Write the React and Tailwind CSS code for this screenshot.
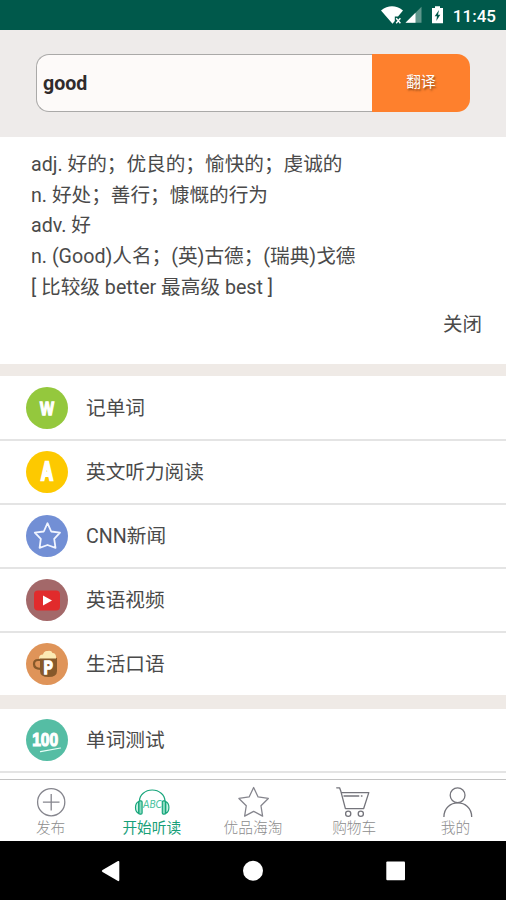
import clsx from 'clsx'

const definitions = [
  'adj. 好的；优良的；愉快的；虔诚的',
  'n. 好处；善行；慷慨的行为',
  'adv. 好',
  'n. (Good)人名；(英)古德；(瑞典)戈德',
  '[ 比较级 better 最高级 best ]',
]

const STAR = 'M12 1.5 L15.3 8.4 L22.8 9.5 L17.4 14.9 L18.6 22.5 L12 19 L5.4 22.5 L6.6 14.9 L1.2 9.5 L8.7 8.4 Z'

const letter = {
  fill: '#fff',
  stroke: '#fff',
  fontFamily: '"Liberation Sans", sans-serif',
  fontWeight: 700,
  lengthAdjust: 'spacingAndGlyphs',
}

const WordIcon = () => (
  <svg viewBox="0 0 42 42" className="size-[42px]">
    <circle cx="21" cy="21" r="21" fill="#94c83d" />
    <text {...letter} x="14" y="28.2" fontSize="18.5" strokeWidth="1.3" textLength="14">W</text>
  </svg>
)

const ReadingIcon = () => (
  <svg viewBox="0 0 42 42" className="size-[42px]">
    <circle cx="21" cy="21" r="21" fill="#fdc900" />
    <text {...letter} x="15" y="29.2" fontSize="25.5" strokeWidth="2.5" textLength="12">A</text>
  </svg>
)

const NewsIcon = () => (
  <svg viewBox="0 0 42 42" className="size-[42px]">
    <circle cx="21" cy="21" r="21" fill="#728fd5" />
    <path
      d="M21.5 8.2 L25.2 16.5 L34 17.6 L28.2 23.8 L29.5 32.8 L21.5 30 L13.6 32.8 L14.8 23.8 L8.8 17.6 L17.8 16.5 Z"
      fill="none"
      stroke="#f1f5ff"
      strokeWidth="1.8"
      strokeLinejoin="round"
    />
  </svg>
)

const VideoIcon = () => (
  <svg viewBox="0 0 42 42" className="size-[42px]">
    <circle cx="21" cy="21" r="21" fill="#a36869" />
    <rect x="8" y="11.5" width="26" height="20" rx="4" fill="#e12b2c" />
    <path d="M17 16.5 L26 21.5 L17 26.5 Z" fill="#fff" />
  </svg>
)

const SpeakingIcon = () => (
  <svg viewBox="0 0 42 42" className="size-[42px]">
    <circle cx="21" cy="21" r="21" fill="#df9459" />
    <path d="M15 17 H12 Q8 17 8 21 Q8 25.8 14.5 25.8" fill="none" stroke="#87592a" strokeWidth="2.2" />
    <path d="M14 15 H31 V28 Q31 34 22.5 34 Q14 34 14 28 Z" fill="#87592a" />
    <path d="M13 15.5 Q13 11.5 17 11.5 Q18 7.5 21.5 8 Q25.5 7 26.5 10 Q30.5 10 30 15.5 Z" fill="#fceab4" />
    <text {...letter} x="17.7" y="30.6" fontSize="18" strokeWidth="1.6" textLength="9">P</text>
  </svg>
)

const TestIcon = () => (
  <svg viewBox="0 0 42 42" className="size-[42px]">
    <circle cx="21" cy="21" r="21" fill="#55bda4" />
    <text {...letter} x="6.2" y="27" fontSize="19" strokeWidth="1.2" textLength="26">100</text>
    <path d="M14.5 32.6 L34.5 29" stroke="#e9fff8" strokeWidth="1.2" strokeLinecap="round" />
  </svg>
)

const studyItems = [
  { label: '记单词', Icon: WordIcon },
  { label: '英文听力阅读', Icon: ReadingIcon },
  { label: 'CNN新闻', Icon: NewsIcon },
  { label: '英语视频', Icon: VideoIcon },
  { label: '生活口语', Icon: SpeakingIcon },
]

const PublishIcon = () => (
  <svg viewBox="0 0 36 32" className="w-9 h-8" fill="none" stroke="#85858d" strokeWidth="1.3">
    <circle cx="18.2" cy="16.2" r="13.6" />
    <path d="M9.9 16.2 H26.5 M18.2 7.9 V24.5" />
  </svg>
)

const ListenIcon = () => (
  <svg viewBox="0 0 36 32" className="w-9 h-8" fill="none" stroke="#17a57b" strokeWidth="1.2">
    <path d="M5.5 16 V15 A12.7 11 0 0 1 30.9 15 V16" />
    <path d="M4.7 15.5 Q1.5 17 1.5 21.5 Q1.5 26 4.7 27.5 Z M31.7 15.5 Q34.9 17 34.9 21.5 Q34.9 26 31.7 27.5 Z" fill="#c9f2e4" />
    <rect x="4.9" y="14.8" width="3.2" height="13.4" rx="1.2" fill="#8bdcc2" />
    <rect x="28.3" y="14.8" width="3.2" height="13.4" rx="1.2" fill="#8bdcc2" />
    <text
      x="9"
      y="22.4"
      fontSize="10.5"
      textLength="19"
      lengthAdjust="spacingAndGlyphs"
      fontFamily="Lato, sans-serif"
      fontStyle="italic"
      fontWeight="400"
      fill="#4cc3a0"
      stroke="none"
    >
      ABC
    </text>
  </svg>
)

const ShopIcon = () => (
  <svg viewBox="0 0 36 32" className="w-9 h-8" fill="none" stroke="#85858d" strokeLinejoin="round">
    <path d={STAR} transform="translate(2.3 -0.5) scale(1.36)" strokeWidth="0.95" />
  </svg>
)

const CartIcon = () => (
  <svg viewBox="0 0 36 32" className="w-9 h-8" fill="none" stroke="#74747b" strokeWidth="1.3" strokeLinejoin="round" strokeLinecap="round">
    <path d="M0.7 1.8 H3.6 L5 5.8 L9.4 22.7 H27.6 L32.8 6.6 H5.6" />
    <path d="M8 10 H22.8 M25.4 10 H26" />
    <circle cx="12.2" cy="27.7" r="2.6" />
    <circle cx="24.8" cy="27.7" r="2.6" />
  </svg>
)

const MineIcon = () => (
  <svg viewBox="0 0 36 32" className="w-9 h-8" fill="none" stroke="#74747b" strokeWidth="1.3">
    <circle cx="20.6" cy="9.3" r="7.4" />
    <path d="M6.9 31 C6.9 12.2 34.7 12.2 34.7 31" />
  </svg>
)

const tabs = [
  { label: '发布', Icon: PublishIcon },
  { label: '开始听读', Icon: ListenIcon, active: true },
  { label: '优品海淘', Icon: ShopIcon },
  { label: '购物车', Icon: CartIcon },
  { label: '我的', Icon: MineIcon },
]

const StatusBar = () => (
  <header className="flex h-[30px] shrink-0 items-center justify-end bg-[#00594b] pr-[10px] text-white">
    <svg viewBox="0 0 64 22" className="mr-2 h-[22px] w-16">
      <path d="M0 6.5 Q11 -1.8 22 6.5 L17 12.5 H13.8 V17 L11.5 19.7 Z" fill="#fff" />
      <path d="M15.2 14.2 L19.4 19.2 M19.4 14.2 L15.2 19.2" stroke="#fff" strokeWidth="1.4" />
      <path d="M24.5 18.7 L40.5 2.7 V18.7 Z" fill="#5e978c" />
      <path d="M24.5 18.7 L34.5 8.7 V18.7 Z" fill="#fff" />
      <path d="M51 4 H54 V2.3 H59 V4 H62 V19.2 H51 Z" fill="#fff" />
      <path d="M58 6 L53.7 12.2 H56 L55.3 17 L59.3 10.8 H57 Z" fill="#00594b" />
    </svg>
    <span className="pt-[3px] text-[17px] leading-none font-medium">11:45</span>
  </header>
)

const SearchBar = () => (
  <section className="flex h-[107px] shrink-0 bg-[#eeebea] pt-6 pr-9 pb-[25px] pl-9">
    <div className="flex h-[58px] w-[336px] items-center rounded-l-[13px] border border-r-0 border-[#aaa9a8] bg-[#fdfaf9] pt-0.5 pl-1.5 text-[19.6px] font-bold text-[#302b2b]">
      good
    </div>
    <button className="h-[58px] w-[98px] rounded-r-[13px] bg-[#fe802d] pb-0.5 text-[14.7px] text-white [text-shadow:1px_2px_2px_rgba(90,50,20,0.65)]">
      翻译
    </button>
  </section>
)

const MenuRow = ({ label, Icon, last }) => (
  <li className={clsx('flex items-center pl-[26px]', last ? 'h-[62px]' : 'h-16 border-b-2 border-[#e4e4e4]')}>
    <Icon />
    <span className="ml-[18px] pt-px text-[19.65px] leading-none">{label}</span>
  </li>
)

const NavBar = () => (
  <nav className="flex h-[59px] shrink-0 items-center justify-center bg-black">
    <svg viewBox="0 0 304 22" className="h-[22px] w-[304px]" fill="#fff">
      <path d="M1.5 10 L17 1 Q18.3 0.5 18.3 2 V20 Q18.3 21.5 17 21 L1.5 12 Q0 11 1.5 10 Z" />
      <circle cx="152" cy="10.7" r="10" />
      <rect x="285.3" y="1.5" width="18.7" height="18.7" rx="1" />
    </svg>
  </nav>
)

export default function App() {
  return (
    <div className="flex h-[900px] w-[506px] flex-col overflow-hidden bg-white font-[Roboto,'Noto_Sans_CJK_SC',sans-serif] text-[#4a4a4a]">
      <StatusBar />
      <SearchBar />

      <section className="h-[227px] shrink-0 pt-[13px] pr-6 pl-[31px]">
        <div className="text-[19.65px] leading-[30.7px]">
          {definitions.map((line) => (
            <p key={line}>{line}</p>
          ))}
        </div>
        <div className="mt-1.5 text-right text-[19.5px] leading-[30px]">关闭</div>
      </section>

      <main className="min-h-0 flex-1 overflow-hidden">
        <ul className="border-t-[12px] border-[#efeae6] pt-px">
          {studyItems.map((item, i) => (
            <MenuRow key={item.label} {...item} last={i === studyItems.length - 1} />
          ))}
        </ul>
        <ul className="border-t-[14px] border-[#efeae6]">
          <MenuRow label="单词测试" Icon={TestIcon} />
        </ul>
      </main>

      <footer className="grid h-[62px] shrink-0 grid-cols-5 border-t border-[#c4c4c4] bg-white pt-1.5">
        {tabs.map(({ label, Icon, active }) => (
          <div key={label} className="flex flex-col items-center">
            <Icon />
            <span className={clsx('mt-0.5 text-[14.7px] leading-[16px]', active ? 'text-[#18a079]' : 'font-light text-[#8d8d8d]')}>
              {label}
            </span>
          </div>
        ))}
      </footer>
      <NavBar />
    </div>
  )
}
